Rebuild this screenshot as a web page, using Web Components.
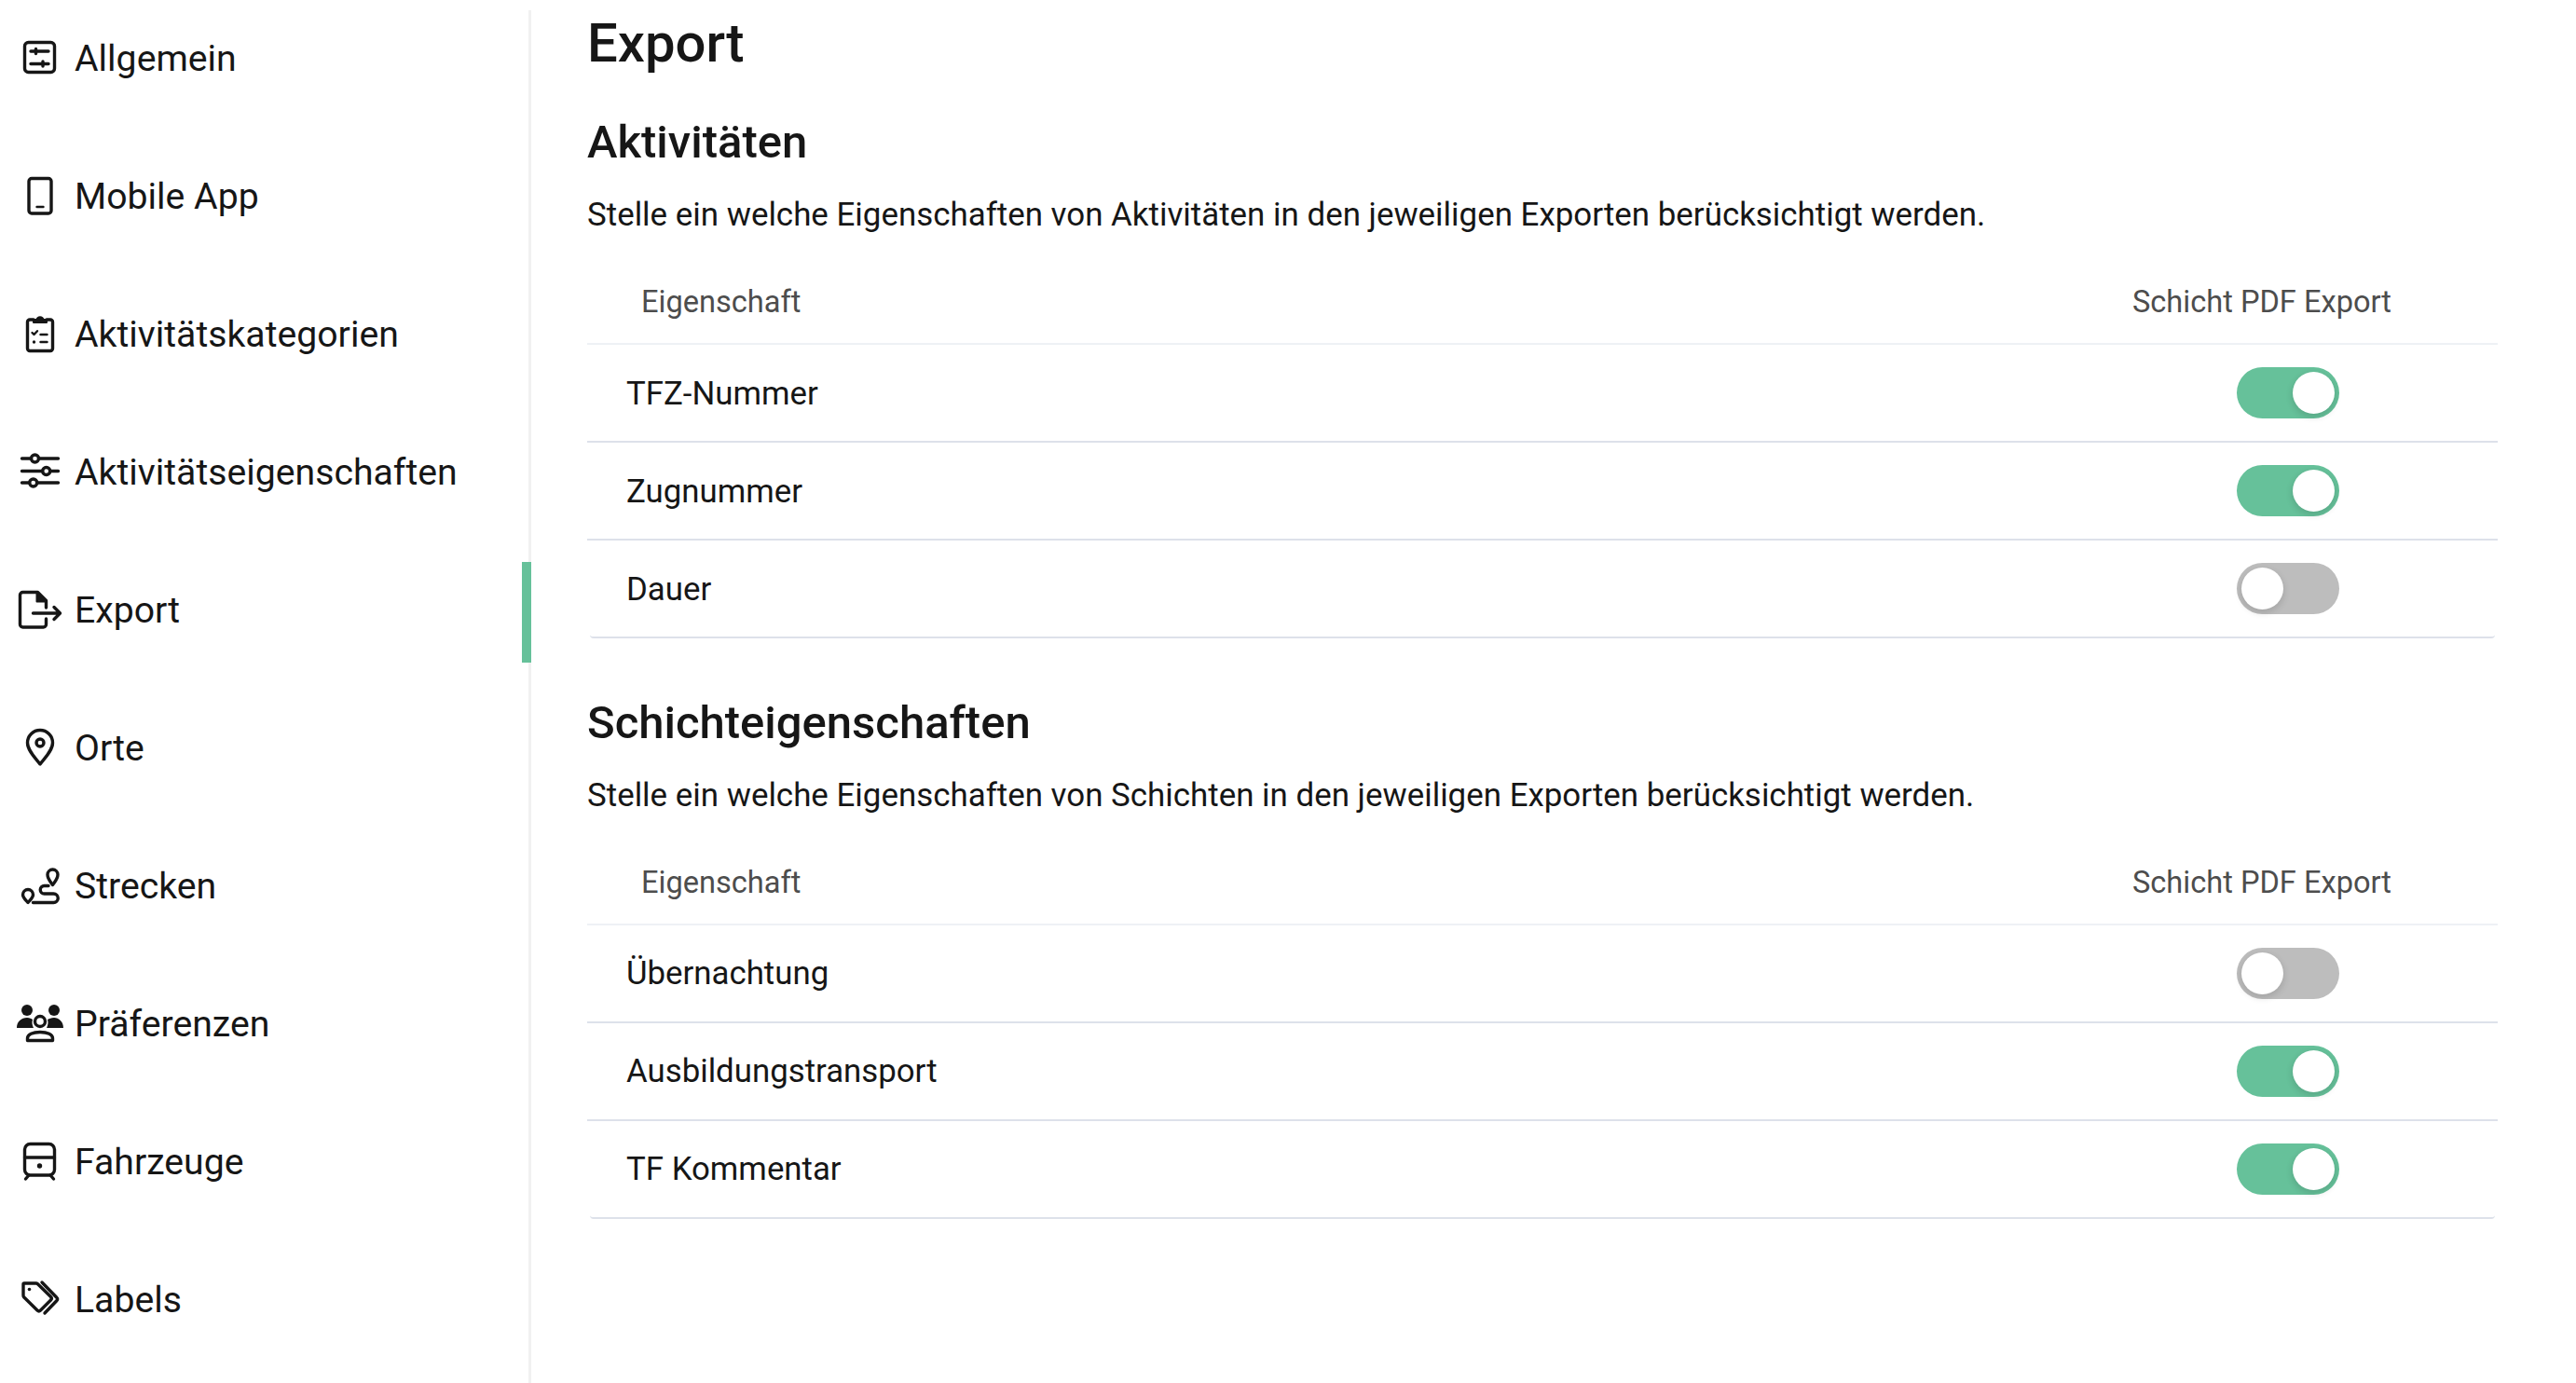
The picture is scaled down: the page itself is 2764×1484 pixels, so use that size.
<!DOCTYPE html>
<html lang="de"><head><meta charset="utf-8"><title>Export</title>
<style>
html,body{margin:0;padding:0;background:#fff;height:100%}
body{font-family:Roboto,"Liberation Sans",sans-serif;color:#161616;overflow:hidden}
</style></head><body>
<settings-page>
  <side-nav slot="nav">
    <nav-item icon="general">Allgemein</nav-item>
    <nav-item icon="mobile">Mobile App</nav-item>
    <nav-item icon="clipboard">Aktivitätskategorien</nav-item>
    <nav-item icon="sliders">Aktivitätseigenschaften</nav-item>
    <nav-item icon="export" active>Export</nav-item>
    <nav-item icon="pin">Orte</nav-item>
    <nav-item icon="route">Strecken</nav-item>
    <nav-item icon="people">Präferenzen</nav-item>
    <nav-item icon="train">Fahrzeuge</nav-item>
    <nav-item icon="tags">Labels</nav-item>
  </side-nav>
  <h1 slot="title">Export</h1>
  <export-section heading="Aktivitäten" description="Stelle ein welche Eigenschaften von Aktivitäten in den jeweiligen Exporten berücksichtigt werden.">
    <export-row label="TFZ-Nummer" checked></export-row>
    <export-row label="Zugnummer" checked></export-row>
    <export-row label="Dauer" last></export-row>
  </export-section>
  <export-section heading="Schichteigenschaften" description="Stelle ein welche Eigenschaften von Schichten in den jeweiligen Exporten berücksichtigt werden.">
    <export-row label="Übernachtung"></export-row>
    <export-row label="Ausbildungstransport" checked></export-row>
    <export-row label="TF Kommentar" checked last></export-row>
  </export-section>
</settings-page>
<script>
const ICONS={
general:`<rect x="8.5" y="8.5" width="32" height="32" rx="4"/><path d="M15 18H34M15 31.5H34"/><path d="M20.5 15.5V20.5M28 29V34"/>`,
mobile:`<rect x="13" y="6.5" width="24" height="37.5" rx="3"/><path d="M21.5 37H28.5" stroke-width="2.4"/>`,
clipboard:`<path d="M18 10H14a2.5 2.5 0 0 0-2.5 2.5V41a2.5 2.5 0 0 0 2.5 2.5H36a2.5 2.5 0 0 0 2.5-2.5V12.5a2.5 2.5 0 0 0-2.5-2.5H32"/><path d="M18 13V10h3.5a3.6 3.6 0 0 1 7 0H32v3z" fill="#161616" stroke-width="2"/><path d="M16.5 24l2 2 3.5-3.8M25.5 26H32.5M25.5 34H32.5" stroke-width="2.4"/><circle cx="18.5" cy="34" r="1.7" fill="#161616" stroke="none"/>`,
sliders:`<path d="M5.5 11H15.5M23.5 11H44.5M5.5 24.5H27.5M36 24.5H44.5M5.5 37H13.5M22 37H44.5"/><circle cx="19.5" cy="11" r="4"/><circle cx="31.7" cy="24.5" r="4"/><circle cx="17.7" cy="37" r="4"/>`,
export:`<path d="M31.5 23V15.5L22.5 6.5H6.5a3 3 0 0 0-3 3V41a3 3 0 0 0 3 3H28.5a3 3 0 0 0 3-3V35"/><path d="M21.5 6.5V16.5H31.5z" fill="#161616" stroke-width="2"/><path d="M17.5 29H46M40 22.5L46.5 29L40 35.5"/>`,
pin:`<path d="M25 43C20.5 37 11.5 28.5 11.5 20A13.5 13.5 0 0 1 38.5 20C38.5 28.5 29.5 37 25 43Z"/><circle cx="25" cy="20" r="4"/>`,
route:`<path d="M38.5 24.5C36 21 33 18 33 13.5a5.5 5.5 0 0 1 11 0C44 18 41 21 38.5 24.5Z"/><path d="M12 43.5C10 41 6.5 38.5 6.5 35a5.5 5.5 0 0 1 11 0C17.5 38.5 14 41 12 43.5Z"/><path d="M34 25.5H29.5a4.2 4.2 0 0 0 0 8.5H39.5a4.5 4.5 0 0 1 0 9.5H17.5"/>`,
people:`<circle cx="11" cy="11" r="6" fill="#161616" stroke="none"/><circle cx="40" cy="11" r="6" fill="#161616" stroke="none"/><circle cx="25" cy="23" r="5.5"/><path d="M0 30C0 23 5 19 11 19C14 19 15.5 20 17 21C16 24 16.5 27 18 30Z" fill="#161616" stroke="none"/><path d="M50 30C50 23 45 19 40 19C37 19 35 20 33 21C34 24 33.5 27 32 30Z" fill="#161616" stroke="none"/><path d="M11.5 43.5V41C11.5 37 17 34.500 25 34.500S38.5 37 38.5 41V43.500Z"/>`,
train:`<rect x="8.5" y="6.5" width="32" height="33.5" rx="6"/><path d="M8.5 21H40.5M13 40L9.5 44M36 40L39.5 44"/><circle cx="24.5" cy="30" r="2.7" fill="#161616" stroke="none"/>`,
tags:`<path d="M8 8H20.5a3 3 0 0 1 2 .8L36.5 22.5a2.5 2.5 0 0 1 0 3.5L25.5 37a2.5 2.5 0 0 1-3.5 0L7.8 23a3 3 0 0 1-.8-2V9a1 1 0 0 1 1-1Z"/><path d="M27 7L43 23.5a2 2 0 0 1 0 3L30 40" /><circle cx="13.5" cy="14.5" r="1.8" fill="#161616" stroke="none"/>`
};
class Base extends HTMLElement{
  render(html){ if(!this.shadowRoot) this.attachShadow({mode:'open'}); this.shadowRoot.innerHTML=html; }
  connectedCallback(){ this.draw(); }
}
customElements.define('settings-page',class extends Base{draw(){this.render(`<style>
:host{display:grid;grid-template-columns:570px 1fr;height:1484px;box-sizing:border-box}
.main{padding:0 84px 0 60px;min-width:0}
::slotted(h1){margin:0;font:500 58px/76px Roboto,sans-serif;padding-top:8px;height:84px;color:#161616}
</style><slot name="nav"></slot><div class="main"><slot name="title"></slot><slot></slot></div>`);}});
customElements.define('side-nav',class extends Base{draw(){this.render(`<style>
:host{display:flex;flex-direction:column;gap:46px;box-sizing:border-box;margin-top:11px;border-right:3px solid #f1f1f1;height:1473px}
</style><slot></slot>`);}});
customElements.define('nav-item',class extends Base{draw(){
const k=this.getAttribute('icon');
this.render(`<style>
:host{display:flex;align-items:center;gap:12px;height:102px;padding-left:18px;position:relative;font:400 39.2px/48px Roboto,sans-serif;color:#161616;flex:none}
svg{width:50px;height:50px;flex:none;fill:none;stroke:#161616;stroke-width:3.4;stroke-linecap:round;stroke-linejoin:round;overflow:visible}
span{padding-top:2px}
.bar{position:absolute;top:0;right:-3px;width:10px;height:108px;background:#66c19a}
</style><svg viewBox="0 0 50 50" aria-hidden="true">${ICONS[k]||''}</svg><span><slot></slot></span>${this.hasAttribute('active')?'<i class="bar"></i>':''}`);}});
customElements.define('export-section',class extends Base{draw(){
this.render(`<style>
:host{display:block;height:622.5px;box-sizing:border-box}
h2{margin:0;font:500 49px/60px Roboto,sans-serif;color:#161616;padding-top:31px}
p{margin:24px 0 0;font:400 34.9px/48px Roboto,sans-serif;color:#161616}
.head{display:flex;justify-content:space-between;align-items:center;height:115px;box-sizing:border-box;padding:25px 114px 0 58px;font:400 32.6px/44px Roboto,sans-serif;color:#4d4d4d;border-bottom:2px solid #eef1f5}
</style><h2>${this.getAttribute('heading')}</h2><p>${this.getAttribute('description')}</p>
<div class="head"><span>Eigenschaft</span><span>Schicht PDF Export</span></div><slot></slot>`);}});
customElements.define('export-row',class extends Base{draw(){
const last=this.hasAttribute('last');
this.render(`<style>
:host{display:flex;justify-content:space-between;align-items:center;box-sizing:border-box;height:105px;padding:0 ${last?167:170}px 0 ${last?39:42}px;${last?'margin:0 3px;':''}border-bottom:2px solid #dde1ea;font:400 34.8px/48px Roboto,sans-serif;color:#161616;${last?'border-radius:0 0 4px 4px;':''}}
</style><span>${this.getAttribute('label')}</span><x-toggle ${this.hasAttribute('checked')?'checked':''}></x-toggle>`);}});
customElements.define('x-toggle',class extends Base{draw(){
const on=this.hasAttribute('checked');
this.render(`<style>
:host{display:block;width:110px;height:55px;border-radius:28px;background:${on?'#66c19a':'#bdbdbd'};position:relative;flex:none}
.k{position:absolute;top:5px;${on?'right':'left'}:5px;width:45px;height:45px;border-radius:50%;background:#fff;box-shadow:0 3px 7px 1px rgba(0,0,0,.12)}
</style><div class="k"></div>`);}});
</script>
</body></html>
